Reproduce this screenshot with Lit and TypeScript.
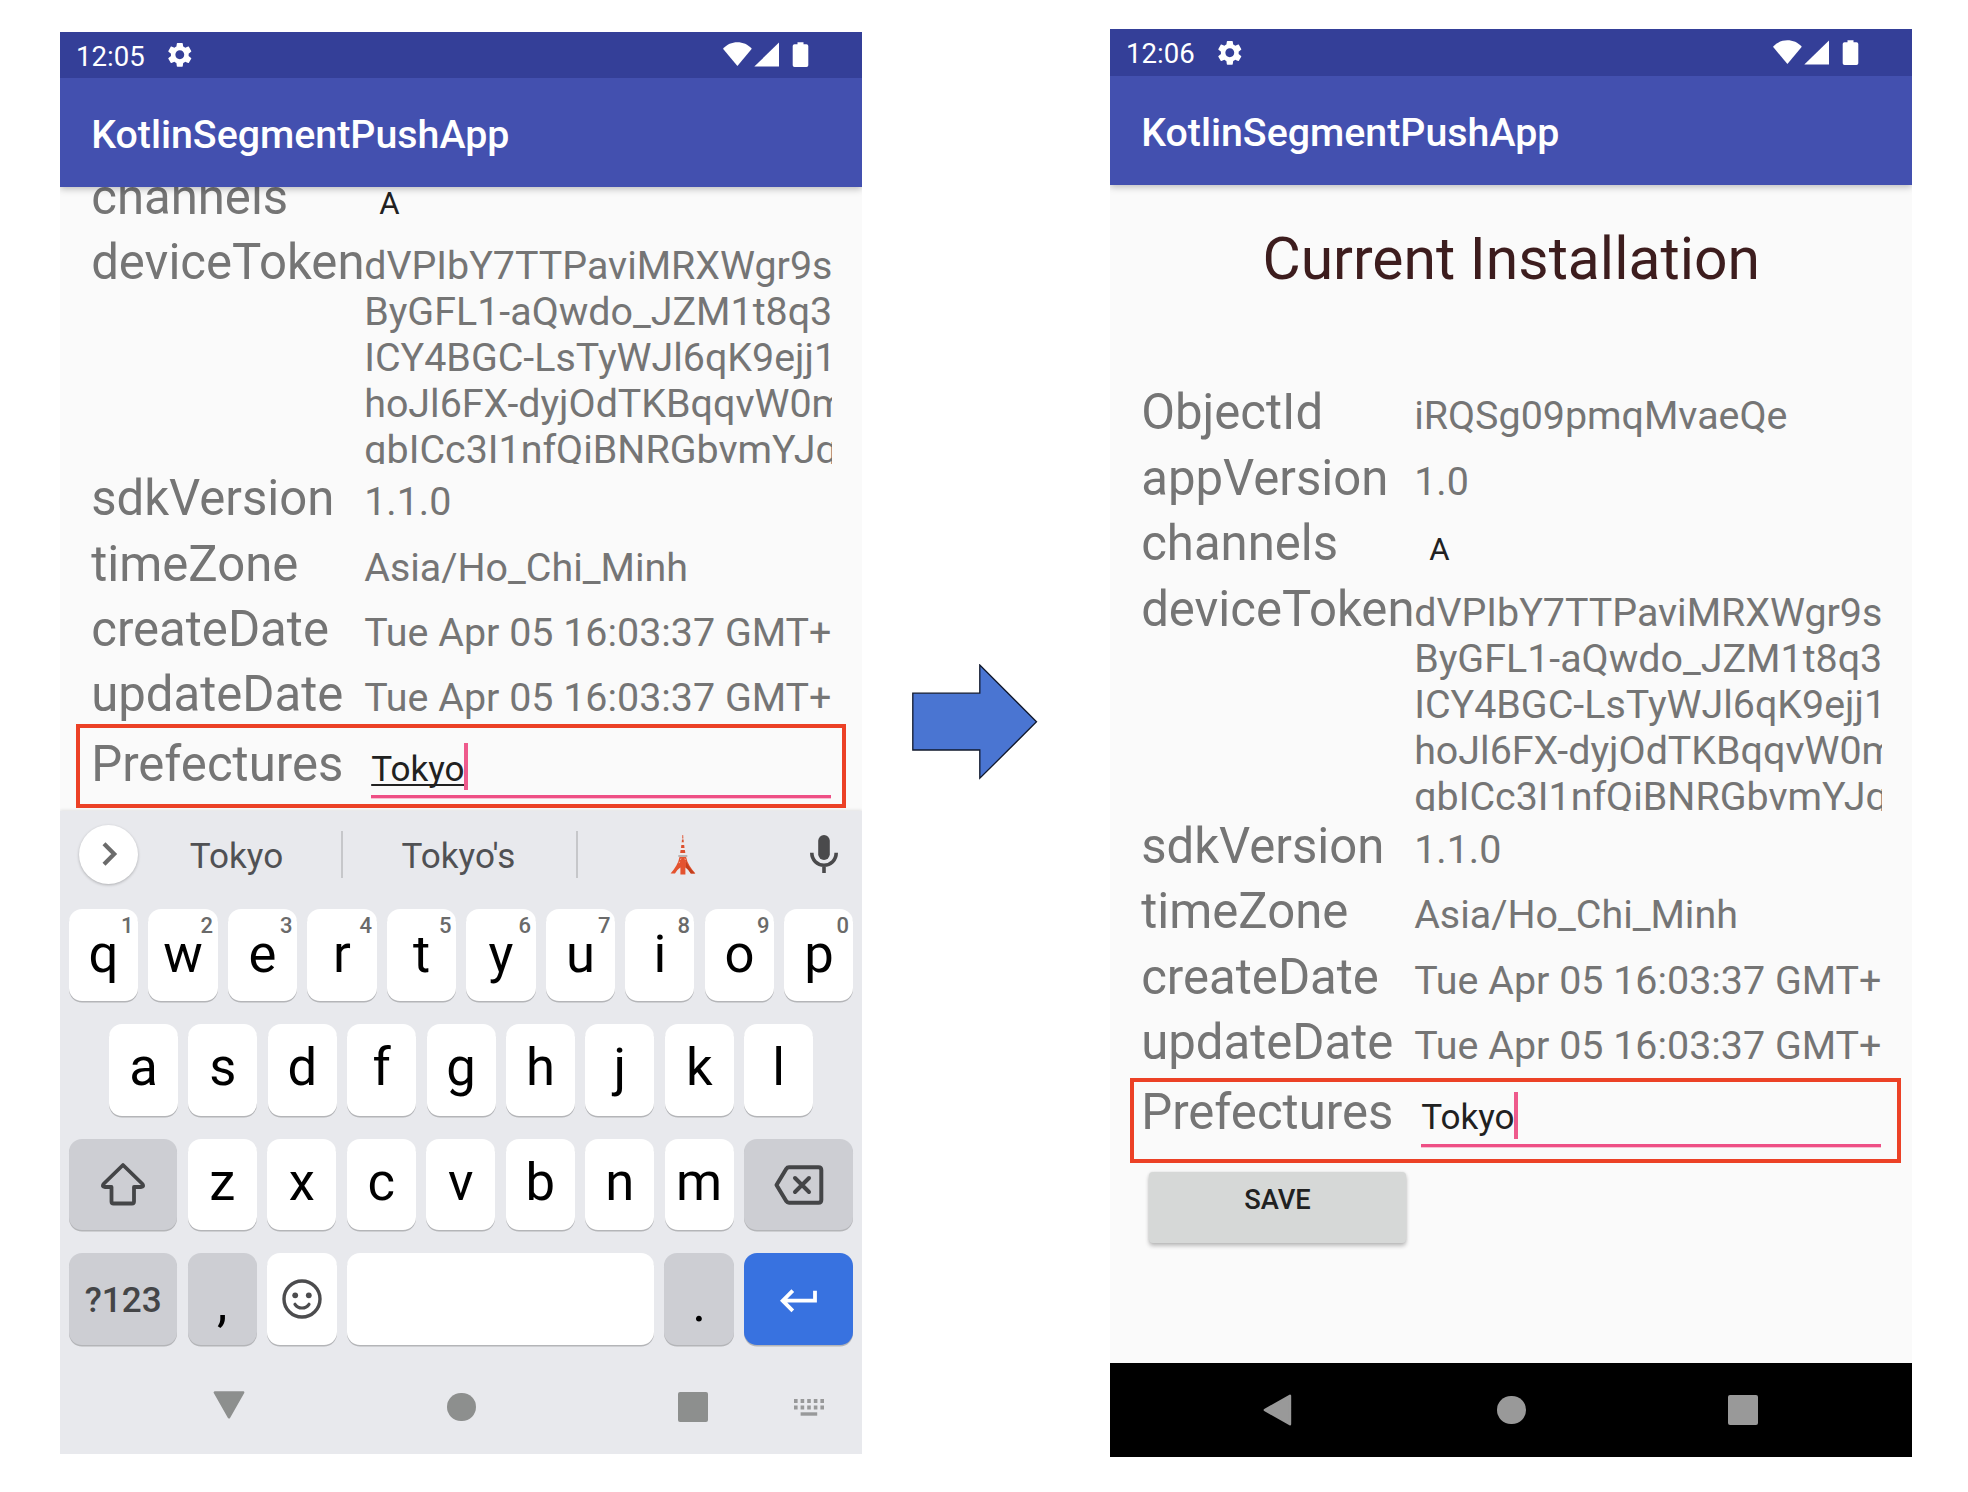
import { LitElement, html, css, svg, nothing, type TemplateResult } from "lit";
import { customElement, property } from "lit/decorators.js";
import { classMap } from "lit/directives/class-map.js";

interface Field {
  name: string;
  value: string | string[];
  kind?: "channel";
}

const TOKEN = [
  "dVPIbY7TTPaviMRXWgr9s",
  "ByGFL1-aQwdo_JZM1t8q3",
  "ICY4BGC-LsTyWJl6qK9ejj1",
  "hoJl6FX-dyjOdTKBqqvW0m",
  "qbICc3I1nfQiBNRGbvmYJq",
];

const HEAD_FIELDS: Field[] = [
  { name: "ObjectId", value: "iRQSg09pmqMvaeQe" },
  { name: "appVersion", value: "1.0" },
];

const FIELDS: Field[] = [
  { name: "channels", value: "A", kind: "channel" },
  { name: "deviceToken", value: TOKEN },
  { name: "sdkVersion", value: "1.1.0" },
  { name: "timeZone", value: "Asia/Ho_Chi_Minh" },
  { name: "createDate", value: "Tue Apr 05 16:03:37 GMT+" },
  { name: "updateDate", value: "Tue Apr 05 16:03:37 GMT+" },
];

const icon = (w: number, h: number, box: string, body: unknown) =>
  html`<svg width=${w} height=${h} viewBox=${box} aria-hidden="true">${body}</svg>`;

const gear = icon(29.6, 29.6, "0 0 24 24", svg`<path fill="#fff" d="M19.14 12.94c.04-.3.06-.61.06-.94 0-.32-.02-.64-.07-.94l2.03-1.58c.18-.14.23-.41.12-.61l-1.92-3.32c-.12-.22-.37-.29-.59-.22l-2.39.96c-.5-.38-1.03-.7-1.62-.94l-.36-2.54c-.04-.24-.24-.41-.48-.41h-3.84c-.24 0-.43.17-.47.41l-.36 2.54c-.59.24-1.13.57-1.62.94l-2.39-.96c-.22-.08-.47 0-.59.22L2.74 8.87c-.12.21-.08.47.12.61l2.03 1.58c-.05.3-.09.63-.09.94s.02.64.07.94l-2.03 1.58c-.18.14-.23.41-.12.61l1.92 3.32c.12.22.37.29.59.22l2.39-.96c.5.38 1.03.7 1.62.94l.36 2.54c.05.24.24.41.48.41h3.84c.24 0 .44-.17.47-.41l.36-2.54c.59-.24 1.13-.56 1.62-.94l2.39.96c.22.08.47 0 .59-.22l1.92-3.32c.12-.22.07-.47-.12-.61l-2.01-1.58zM12 15.6c-1.98 0-3.6-1.62-3.6-3.6s1.62-3.6 3.6-3.6 3.6 1.62 3.6 3.6-1.62 3.6-3.6 3.6z"/>`);

const signals = icon(86, 26, "0 0 86 26", svg`
  <path fill="#fff" d="M0 6.8C3.8 2.4 9 .3 14.4 .3S25 2.4 28.8 6.8L14.4 24z"/>
  <path fill="#fff" d="M31.3 24.6L56 .6V24.6z"/>
  <path fill="#fff" d="M71.5 2.2h3V.2h6v2h3q1.8 0 1.8 1.8V23.2q0 1.8-1.8 1.8H71.5q-1.8 0-1.8-1.8V4q0-1.8 1.8-1.8z"/>`);

const tower = icon(26, 42, "0 0 26 42", svg`
  <path fill="#e2674a" d="M12.3 1h.9l.2 3.5h-1.3z"/>
  <path fill="#d9532f" d="M12 5.5h1.6l.2 3H11.7z"/>
  <path fill="#f4e9e6" d="M11.6 8.5h2.3l.2 2.5H11.4z"/>
  <path fill="#dd4f2e" d="M11.3 11h2.9l.3 3H11z"/>
  <path fill="#f4e9e6" d="M11 14h3.5l.3 2H10.7z"/>
  <path fill="#dd4f2e" d="M10.6 16h4.3l.4 3H10.2z"/>
  <path fill="#f4e9e6" d="M10.2 19h5.1l.3 2H9.9z"/>
  <path fill="#b9b3b1" d="M8.3 21h9v2h-9z"/>
  <path fill="#e4532f" d="M9.5 23h6.6c1.2 6 4.6 11.5 9.3 16.4h-4.6c-1.5-2.6-3.2-4.6-5.4-6v7.1h-5v-7.1c-2.2 1.4-3.9 3.4-5.4 6H.6C5.2 34.5 8.4 29 9.5 23z"/>
  <path fill="none" stroke="#f3b29f" stroke-width="1" stroke-dasharray="1.5 2" d="M11 24.5L8.500 30.5M14.8 24.5L17.3 30.5"/>
  <path fill="#c23f1d" d="M16 26c1.2 5 4.6 9.3 9 13.400h-4.2c-1.5-2.6-3.2-4.600-4.8-6z"/>`);

const mic = icon(28, 38, "0 0 28 38", svg`
  <rect x="8.2" y="0" width="11.6" height="25" rx="5.8" fill="#4a4a4c"/>
  <path d="M1.8 17.8C1.8 25 7.2 30.2 14 30.2S26.2 25 26.2 17.8M14 30V38" fill="none" stroke="#4a4a4c" stroke-width="3.6"/>`);

const chevron = icon(16, 24, "0 0 16 24", svg`<path d="M2 1.8L12.2 12L2 22.2" fill="none" stroke="#6b6b6b" stroke-width="4.2"/>`);

const shift = icon(46, 44, "0 0 46 44", svg`<path d="M23 3L42.5 22Q44.5 25 41 25H34V39.5Q34 41.5 32 41.5H13.5Q11.5 41.5 11.5 39.5V25H5Q1.500 25 3.5 22z" fill="none" stroke="#444547" stroke-width="3.8" stroke-linejoin="round"/>`);

const backspace = icon(50, 40, "0 0 50 40", svg`
  <path d="M15 2.3H44.5Q47.3 2.3 47.3 5V35Q47.3 37.7 44.5 37.7H15Q13.3 37.7 12.3 36.2L2.5 20L12.3 3.8Q13.3 2.3 15 2.3z" fill="none" stroke="#444547" stroke-width="4" stroke-linejoin="round"/>
  <path d="M21 13L35 27M35 13L21 27" fill="none" stroke="#444547" stroke-width="4" stroke-linecap="round"/>`);

const smile = icon(40, 40, "0 0 40 40", svg`
  <circle cx="20" cy="20" r="18" fill="none" stroke="#4c4c4e" stroke-width="3.4"/>
  <circle cx="13.2" cy="16.3" r="2.9" fill="#4c4c4e"/><circle cx="26.8" cy="16.3" r="2.9" fill="#4c4c4e"/>
  <path d="M13 25.3Q15.5 29 20 29T27 25.3" fill="none" stroke="#4c4c4e" stroke-width="3.2" stroke-linecap="round"/>`);

const enter = icon(38, 24, "0 0 38 24", svg`<path d="M35 1.8V11.7H3M12.8 1.6L2.7 11.7L12.8 21.8" fill="none" stroke="#fff" stroke-width="3.8"/>`);

const navDown = icon(32, 28, "0 0 32 28", svg`<path d="M1.8 1.5H30.2L16 26.3z" fill="#8d8f8e" stroke="#8d8f8e" stroke-width="2.4" stroke-linejoin="round"/>`);
const navBack = icon(29, 32, "0 0 29 32", svg`<path d="M27 1.8V30.2L1.8 16z" fill="#999" stroke="#999" stroke-width="2.4" stroke-linejoin="round"/>`);
const navKeys = icon(30, 17, "0 0 30 17", svg`
  ${[0, 6.6, 13.2, 19.8, 26.4].map((x) => svg`<rect x=${x} y="0" width="3.6" height="4" fill="#98999a"/><rect x=${x} y="6.5" width="3.6" height="4" fill="#98999a"/>`)}
  <rect x="6.6" y="13.3" width="16.6" height="3.4" fill="#98999a"/>`);

const bigArrow = icon(126, 116, "0 0 126 116", svg`<path d="M.8 29.2H67.8V1L124.5 57.8L67.8 114.3V86H.8z" fill="#4a75d2" stroke="#10182c" stroke-width="1.3"/>`);

const blockIcons = css`svg { display: block; }`;

/** Status bar and title bar at the top of a device screen. */
@customElement("device-header")
class DeviceHeader extends LitElement {
  @property() time = "";

  static styles = [blockIcons, css`
    :host { display: block; position: relative; color: #fff; box-shadow: 0 2px 7px rgba(0, 0, 0, 0.26); z-index: 1; }
    .status {
      display: flex; align-items: center; height: var(--status-height, 46px); box-sizing: border-box;
      padding: 0 53.5px 0 16px; background: #343f98; font-size: 27.6px; line-height: 30px;
    }
    .time { width: 89px; padding-top: 3px; }
    .gear { flex: 1; }
    .bar {
      display: flex; align-items: center; height: 109px; box-sizing: border-box; padding: 4px 0 0 31.2px;
      background: #4350af; font-size: 39.35px; font-weight: 500;
    }
  `];

  render() {
    return html`
      <div class="status">
        <span class="time">${this.time}</span>
        <span class="gear">${gear}</span>
        ${signals}
      </div>
      <div class="bar">KotlinSegmentPushApp</div>
    `;
  }
}

/** Name and value rows of the installation, ending in the editable prefecture. */
@customElement("installation-form")
class InstallationForm extends LitElement {
  @property({ type: Boolean }) full = false;
  @property({ type: Boolean }) composing = false;

  static styles = css`
    :host { display: block; }
    .row {
      display: grid; grid-template-columns: 273px 467.5px; align-items: start;
      height: 65.25px; padding-left: 31.2px; position: relative; color: #757575;
    }
    .row.tall { height: 236.3px; }
    :host([full]) .row { height: 65.5px; }
    :host([full]) .row.tall { height: 236.9px; }
    .name { font-size: 49.1px; line-height: 57px; white-space: nowrap; }
    .value { margin-top: 9px; font-size: 39.4px; line-height: 46px; white-space: nowrap; overflow: hidden; }
    .tall .value { height: 221px; }
    .line { display: block; }
    .value.channel { margin: 12px 0 0 15px; font-size: 31.2px; color: #212121; }
    .heading {
      margin: 0 0 91.8px; padding-top: 39.7px; text-align: center; font-size: 58.8px;
      line-height: 68px; font-weight: 400; color: #3d1d1e;
    }
    .row.edit, :host([full]) .row.edit { margin-top: 4.6px; height: 72px; }
    .field {
      display: flex; margin: 10px 0 0 7px; width: 460px; height: 49.5px; border-bottom: 3px solid #ee4f85;
      box-shadow: 0 1px 0 #f9bfd2; font-size: 35.1px; line-height: 46px; color: #212121;
    }
    .caret { width: 4px; height: 47px; margin: -2.5px 0 0 -0.5px; background: #ee5a8c; }
    .composing .text {
      text-decoration: underline; text-decoration-thickness: 2px; text-underline-offset: 2.5px;
      text-decoration-skip-ink: none;
    }
    .callout {
      position: absolute; box-sizing: border-box; left: 16px; top: -12px; width: 770px; height: 84px;
      border: 4px solid #ec4126;
    }
    .full .callout { left: 20px; top: -6px; width: 771px; height: 85px; }
    .save {
      display: flex; justify-content: center; align-items: flex-start; box-sizing: border-box;
      margin: 15.3px 0 0 38.7px; width: 257.5px; height: 71.5px; padding: 12px 0 0;
      border: 0; border-radius: 4px; background: #d6d8d7;
      box-shadow: 0 3px 4px rgba(0, 0, 0, 0.24), 0 0 3px rgba(0, 0, 0, 0.1);
      font: 500 27.3px/32px Roboto, sans-serif; color: #212121;
    }
  `;

  private row(f: Field): TemplateResult {
    const tall = Array.isArray(f.value);
    return html`
      <div class=${classMap({ row: true, tall })}>
        <span class="name">${f.name}</span>
        <span class=${classMap({ value: true, channel: f.kind === "channel" })}>
          ${tall ? (f.value as string[]).map((l) => html`<span class="line">${l}</span>`) : f.value}
        </span>
      </div>
    `;
  }

  render() {
    return html`
      ${this.full ? html`<h1 class="heading">Current Installation</h1>${HEAD_FIELDS.map((f) => this.row(f))}` : nothing}
      ${FIELDS.map((f) => this.row(f))}
      <div class=${classMap({ row: true, edit: true, full: this.full, composing: this.composing })}>
        <span class="name">Prefectures</span>
        <div class="field"><span class="text">Tokyo</span><span class="caret"></span></div>
        <div class="callout"></div>
      </div>
      ${this.full ? html`<button class="save">SAVE</button>` : nothing}
    `;
  }
}

/** On-screen keyboard with its suggestion strip. */
@customElement("soft-keyboard")
class SoftKeyboard extends LitElement {
  static styles = [blockIcons, css`
    :host { display: block; background: #e8e9ed; box-shadow: 0 -1px 3px rgba(0, 0, 0, 0.1); position: relative; }
    .strip {
      display: grid; grid-template-columns: 97px 184px 2px 233px 2px 209px 1fr; height: 98.3px;
      align-items: start; font-size: 35.1px; line-height: 41px; color: #505154; text-align: center;
    }
    .more {
      display: grid; place-items: center; width: 59px; height: 59px; margin: 13.5px 0 0 19px; border-radius: 50%;
      background: #fff; box-shadow: 0 1px 3px rgba(0, 0, 0, 0.25);
    }
    .more svg { margin-left: 2px; }
    .word { margin-top: 25px; padding-right: 2px; }
    .word.first { padding-right: 25px; }
    .split { height: 47px; margin-top: 20px; background: #c6c7ca; }
    .tower { margin: 23px 0 0 91.5px; }
    .mic { margin: 24px 0 0 22.5px; }
    .rows { display: grid; gap: 23.1px; padding: 0 9px; }
    .keys { display: flex; gap: 10.4px; height: 91.6px; }
    .keys.inset { padding: 0 40.3px 0 40px; }
    .key {
      flex: 1 1 0; position: relative; display: grid; place-items: center; background: #fff; border-radius: 13px;
      box-shadow: 0 1.5px 0 #b4b5b8; color: #000; font-size: 52.6px; line-height: 60px;
    }
    .key .glyph { margin-top: -3px; }
    .inset .key .glyph { margin-top: -5px; }
    .third .key .glyph { margin-top: -4px; }
    .wide { flex: 0 0 108.3px; }
    .wide.end { flex-basis: 109.3px; }
    .space { flex: 0 0 307.2px; }
    .dark { background: #cdced3; }
    .blue { background: #3872e0; }
    .key .low { margin-top: 7px; }
    .mode { font-size: 35.1px; font-weight: 500; color: #444547; margin-top: 2px; }
    .hint {
      position: absolute; top: 3.5px; right: 4.5px; font-size: 22px; line-height: 26px; font-weight: 500; color: #6a6a6a;
    }
    .up { margin-bottom: 1px; }
    .back { margin-top: 1px; }
    .ret { margin-top: 4px; }
  `];

  private letters(s: string, hints = "") {
    return [...s].map(
      (c, i) => html`<div class="key"><span class="glyph">${c}</span>${hints ? html`<span class="hint">${hints[i]}</span>` : nothing}</div>`,
    );
  }

  render() {
    return html`
      <div class="strip">
        <div class="more">${chevron}</div>
        <span class="word first">Tokyo</span>
        <span class="split"></span>
        <span class="word">Tokyo's</span>
        <span class="split"></span>
        <span class="tower">${tower}</span>
        <span class="mic">${mic}</span>
      </div>
      <div class="rows">
        <div class="keys">${this.letters("qwertyuiop", "1234567890")}</div>
        <div class="keys inset">${this.letters("asdfghjkl")}</div>
        <div class="keys third">
          <div class="key wide dark"><span class="up">${shift}</span></div>
          ${this.letters("zxcvbnm")}
          <div class="key wide end dark"><span class="back">${backspace}</span></div>
        </div>
        <div class="keys">
          <div class="key wide dark"><span class="mode">?123</span></div>
          <div class="key dark"><span class="low">,</span></div>
          <div class="key">${smile}</div>
          <div class="key space"></div>
          <div class="key dark"><span class="low">.</span></div>
          <div class="key wide end blue"><span class="ret">${enter}</span></div>
        </div>
      </div>
    `;
  }
}

/** System navigation bar, light under the keyboard and black elsewhere. */
@customElement("nav-bar")
class NavBar extends LitElement {
  @property({ type: Boolean }) dark = false;

  static styles = [blockIcons, css`
    :host { display: block; position: relative; }
    .bar {
      display: grid; grid-template-columns: repeat(6, 116px); align-items: center; justify-items: center;
      height: 94px; padding-left: 111.3px; background: #e8e9ed; color: #8d8f8e;
    }
    .bar.dark { background: #000; color: #999; }
    .a { grid-column: 1; margin-top: -4px; }
    .dark .a { margin-top: 0; margin-right: 3px; }
    .b { grid-column: 3; width: 28.6px; height: 28.6px; border-radius: 50%; background: currentColor; }
    .c { grid-column: 5; width: 30px; height: 30px; margin-right: 1px; border-radius: 2px; background: currentColor; }
    .d { grid-column: 6; }
  `];

  render() {
    return html`
      <div class=${classMap({ bar: true, dark: this.dark })}>
        <span class="a">${this.dark ? navBack : navDown}</span>
        <span class="b"></span>
        <span class="c"></span>
        ${this.dark ? nothing : html`<span class="d">${navKeys}</span>`}
      </div>
    `;
  }
}

@customElement("app-root")
class AppRoot extends LitElement {
  static styles = [blockIcons, css`
    :host {
      display: flex; align-items: flex-start; box-sizing: border-box; width: 1968px; height: 1492px;
      padding-left: 60px; background: #fff; overflow: hidden; font-family: Roboto, sans-serif;
    }
    .phone { display: flex; flex-direction: column; width: 802.4px; background: #fafafa; overflow: hidden; flex: none; }
    .before { height: 1422px; margin-top: 32px; }
    .after { height: 1428px; margin-top: 29px; --status-height: 47px; }
    .screen { flex: 1; min-height: 0; overflow: hidden; }
    .scrolled { margin-top: -18.3px; }
    .keyboard { height: 549px; }
    .arrow { width: 247.6px; padding: 664px 0 0 50px; box-sizing: border-box; flex: none; }
  `];

  render() {
    return html`
      <section class="phone before">
        <device-header time="12:05"></device-header>
        <div class="screen"><installation-form class="scrolled" composing></installation-form></div>
        <soft-keyboard class="keyboard"></soft-keyboard>
        <nav-bar></nav-bar>
      </section>
      <div class="arrow">${bigArrow}</div>
      <section class="phone after">
        <device-header time="12:06"></device-header>
        <div class="screen"><installation-form full></installation-form></div>
        <nav-bar dark></nav-bar>
      </section>
    `;
  }
}
